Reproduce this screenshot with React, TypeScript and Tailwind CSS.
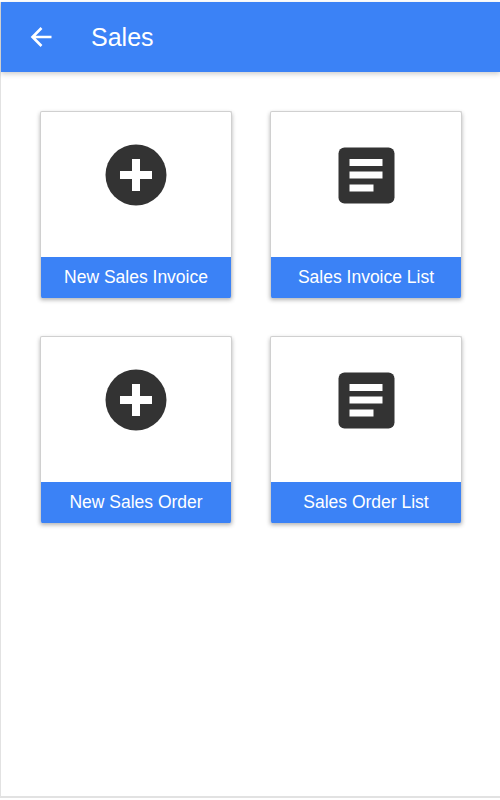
import React from 'react';

const PlusCircleIcon = () => (
  <svg className="mt-[-1px]" width="62" height="62" viewBox="0 0 62 62">
    <circle cx="31" cy="31" r="30.5" fill="#333333" />
    <path d="M27 15h8v12h12v8H35v12h-8V35H15v-8h12z" fill="#ffffff" />
  </svg>
);

const ListIcon = () => (
  <svg className="mt-[2px]" width="57" height="57" viewBox="0 0 57 57">
    <rect x="0.5" y="0.5" width="56" height="56" rx="6" fill="#333333" />
    <path d="M11.5 12h33v7h-33zM11.5 24.5h33v7h-33zM11.5 37.5h24v7h-24z" fill="#ffffff" />
  </svg>
);

interface TileProps {
  label: string;
  icon: React.ReactNode;
}

const Tile: React.FC<TileProps> = ({ label, icon }) => (
  <div className="flex h-[187px] w-[192px] flex-col overflow-hidden rounded-[2px] border-x border-t border-[#d0d0d0] bg-white shadow-[0_2px_4px_rgba(0,0,0,0.3)]">
    <div className="flex h-[145px] items-start justify-center pt-[33px]">{icon}</div>
    <div className="flex h-[41px] items-center justify-center bg-[#3b82f6] text-[17.5px] text-white">
      {label}
    </div>
  </div>
);

export default function App() {
  return (
    <div className="h-[800px] w-[500px] overflow-hidden bg-white pt-[2px] font-['Liberation_Sans',Arial,sans-serif]">
      <div className="h-[796px] border-b-2 border-l border-[#e2e2e2]">
        <header className="flex h-[70px] items-center bg-[#3b82f6] pl-[28px] text-white shadow-[0_2px_5px_rgba(0,0,0,0.2)]">
          <svg width="24" height="24" viewBox="0 0 24 24" fill="none" stroke="#ffffff" strokeWidth="2.6">
            <path d="M22.5 12H3.5M12.5 3l-9 9 9 9" />
          </svg>
          <h1 className="ml-[38px] text-[25px] leading-none">Sales</h1>
        </header>
        <main className="grid grid-cols-[192px_192px] gap-x-[38px] gap-y-[38px] pl-[39px] pt-[39px]">
          <Tile label="New Sales Invoice" icon={<PlusCircleIcon />} />
          <Tile label="Sales Invoice List" icon={<ListIcon />} />
          <Tile label="New Sales Order" icon={<PlusCircleIcon />} />
          <Tile label="Sales Order List" icon={<ListIcon />} />
        </main>
      </div>
    </div>
  );
}
